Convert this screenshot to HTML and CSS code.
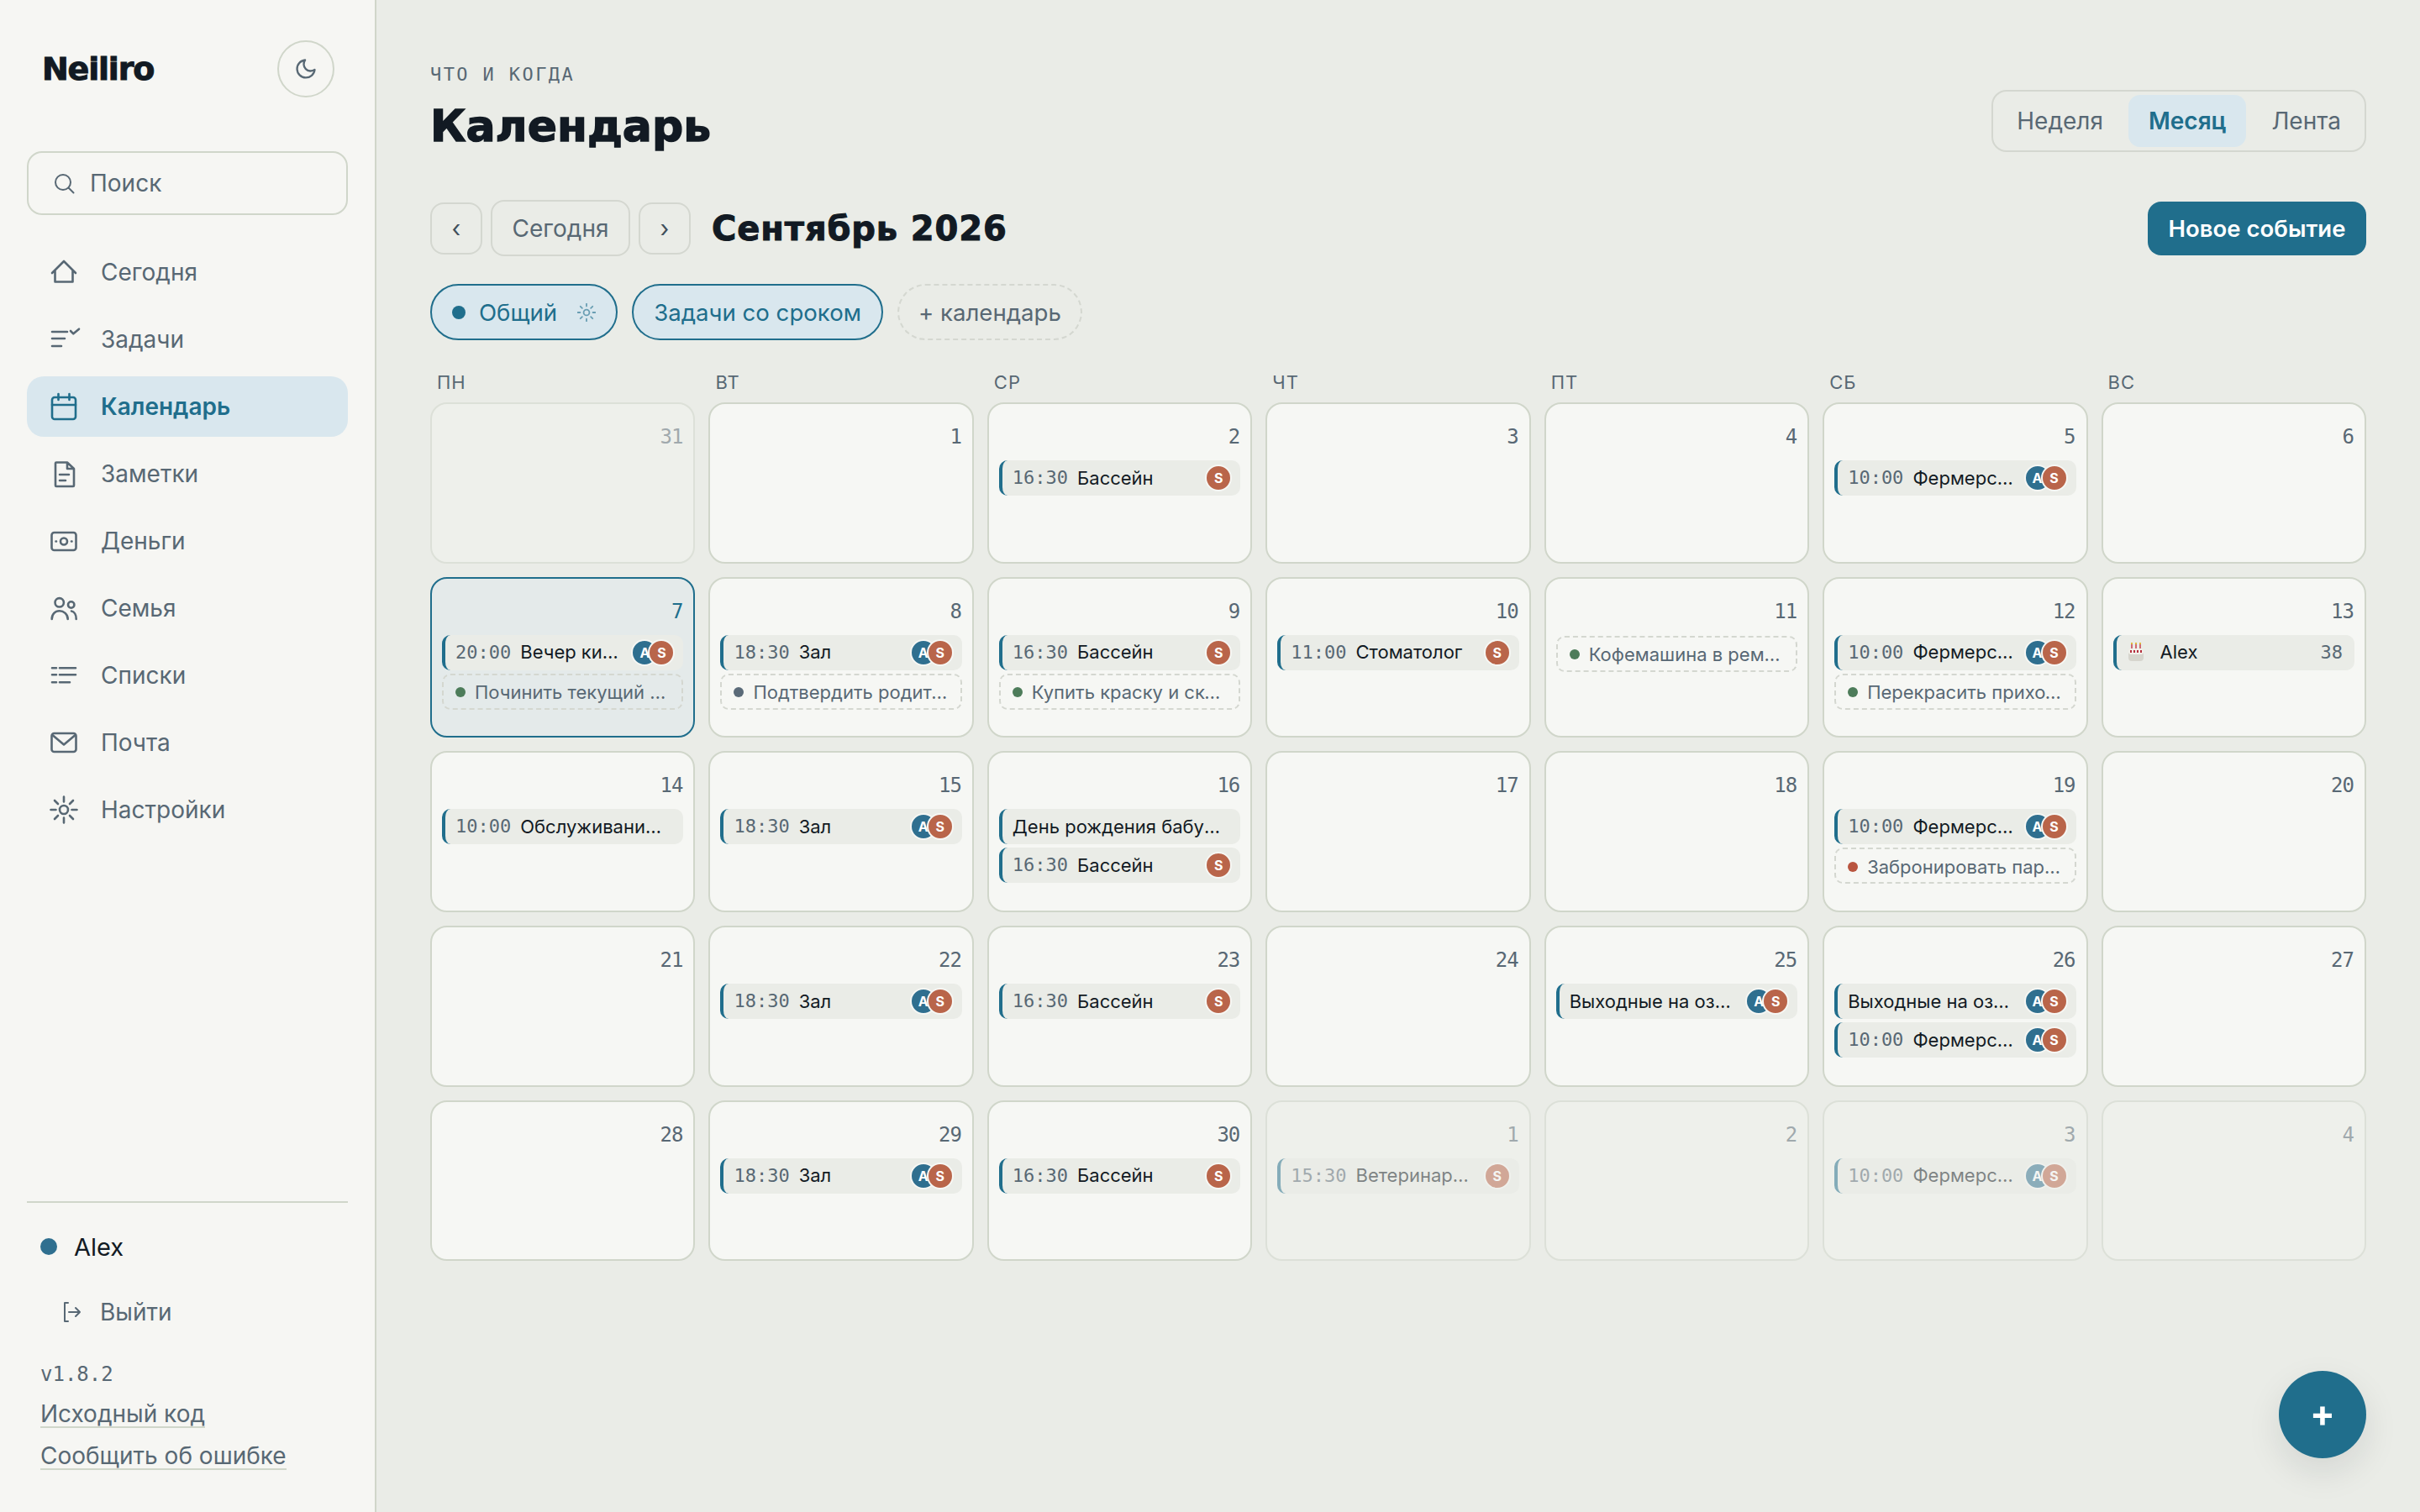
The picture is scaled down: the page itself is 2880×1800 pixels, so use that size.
FILE: index.html
```html
<!DOCTYPE html>
<html lang="ru">
<head>
    <meta charset="utf-8">
    <title>Календарь</title>
    <link rel="stylesheet" href="styles.css">
</head>
<body>
    <aside class="sidebar">
        <div class="brand">
            <div class="logo">Neiliro</div>
            <button class="theme-btn">
                <svg width="28" height="28" viewBox="0 0 24 24" class="icon-thin"><path d="M21 12.79A9 9 0 1 1 11.21 3 7 7 0 0 0 21 12.79z"/></svg>
            </button>
        </div>

        <div class="search">
            <svg width="24" height="24" viewBox="0 0 24 24" class="icon-thin"><circle cx="11" cy="11" r="9"/><path d="M17.5 17.5 23.5 23.5"/></svg>
            <span>Поиск</span>
        </div>

        <nav class="nav">
            <a class="nav-item">
                <svg width="32" height="32" viewBox="0 0 32 32" class="icon"><path d="M2 17 16 3l14 14M5.5 14v13.5h21V14"/></svg>
                <span>Сегодня</span>
            </a>
            <a class="nav-item">
                <svg width="32" height="32" viewBox="0 0 32 32" class="icon"><path d="M2 7h18M2 15h15M2 24h11M24 6l3.3 3.3L34 3.7"/></svg>
                <span>Задачи</span>
            </a>
            <a class="nav-item active">
                <svg width="32" height="32" viewBox="0 0 32 32" class="icon"><rect x="2" y="5" width="28" height="26" rx="3"/><path d="M2 14h28M9.5 1v7M22.5 1v7"/></svg>
                <span>Календарь</span>
            </a>
            <a class="nav-item">
                <svg width="32" height="32" viewBox="0 0 32 32" class="icon"><path d="M6 3.5a1 1 0 0 1 1-1h13l8 7.5v20a1 1 0 0 1-1 1H7a1 1 0 0 1-1-1zM20 2.500V10h8M11 17h11M11 24h7"/></svg>
                <span>Заметки</span>
            </a>
            <a class="nav-item">
                <svg width="32" height="32" viewBox="0 0 32 32" class="icon"><rect x="1.500" y="6" width="29" height="21" rx="3"/><circle cx="16" cy="16.500" r="4"/><path d="M6.500 16.500h.5M25 16.500h.5"/></svg>
                <span>Деньги</span>
            </a>
            <a class="nav-item">
                <svg width="32" height="32" viewBox="0 0 32 32" class="icon"><circle cx="10.700" cy="9.300" r="5.200"/><circle cx="24.700" cy="12" r="3.700"/><path d="M1.700 29c0-6 4-9.700 9-9.700s10 3.700 10 9.700M25 19.500c3.500.5 5.700 4.500 5.700 9.500"/></svg>
                <span>Семья</span>
            </a>
            <a class="nav-item">
                <svg width="32" height="32" viewBox="0 0 32 32" class="icon"><path d="M2 7.300h5M11 7.300h19M2 15.300h5M11 15.300h19M2 24.300h5M11 24.300h12"/></svg>
                <span>Списки</span>
            </a>
            <a class="nav-item">
                <svg width="32" height="32" viewBox="0 0 32 32" class="icon"><rect x="1.500" y="5" width="29" height="22" rx="3"/><path d="M3 7.500 16 18.500 29 7.500"/></svg>
                <span>Почта</span>
            </a>
            <a class="nav-item">
                <svg width="32" height="32" viewBox="0 0 32 32" class="icon"><circle cx="16" cy="16" r="5"/><path d="M16 .5v6M16 25.500v6M.5 16h6M25.500 16h6M5 5l4 4M23 23l4 4M27 5l-4 4M9 23l-4 4"/></svg>
                <span>Настройки</span>
            </a>
        </nav>

        <div class="side-foot">
            <div class="user"><span class="user-dot"></span><span>Alex</span></div>
            <a class="logout">
                <svg width="24" height="24" viewBox="0 0 24 24" class="icon-thin"><path d="M7 1H3v22h4M8 12h13M16 7l5 5-5 5"/></svg>
                <span>Выйти</span>
            </a>
            <div class="version">v1.8.2</div>
            <a class="foot-link">Исходный код</a>
            <a class="foot-link">Сообщить об ошибке</a>
        </div>
    </aside>

    <main class="main">
        <header class="page-head">
            <div>
                <div class="eyebrow">ЧТО И КОГДА</div>
                <h1 class="page-title">Календарь</h1>
            </div>
            <div class="segment">
                <span class="segment-item">Неделя</span>
                <span class="segment-item active">Месяц</span>
                <span class="segment-item">Лента</span>
            </div>
        </header>

        <div class="toolbar">
            <button class="tool-btn square">‹</button>
            <button class="tool-btn today">Сегодня</button>
            <button class="tool-btn square">›</button>
            <h2 class="month-title">Сентябрь 2026</h2>
            <button class="primary-btn">Новое событие</button>
        </div>

        <div class="chips">
            <span class="chip">
                <span class="chip-dot"></span>
                <span>Общий</span>
                <svg width="22" height="22" viewBox="0 0 32 32" class="chip-sun"><circle cx="16" cy="16" r="5"/><path d="M16 1v4M16 27v4M1 16h4M27 16h4M5.500 5.500l3 3M23.500 23.500l3 3M26.500 5.500l-3 3M8.500 23.500l-3 3"/></svg>
            </span>
            <span class="chip">Задачи со сроком</span>
            <span class="chip chip-add">+ календарь</span>
        </div>

        <div class="weekdays">
            <span>ПН</span><span>ВТ</span><span>СР</span><span>ЧТ</span><span>ПТ</span><span>СБ</span><span>ВС</span>
        </div>

        <div class="calendar">
            <div class="day muted"><div class="day-num">31</div></div>
            <div class="day"><div class="day-num">1</div></div>
            <div class="day"><div class="day-num">2</div>
                <div class="event"><span class="event-time">16:30</span><span class="event-title">Бассейн</span><span class="avatars"><span class="avatar s">S</span></span></div>
            </div>
            <div class="day"><div class="day-num">3</div></div>
            <div class="day"><div class="day-num">4</div></div>
            <div class="day"><div class="day-num">5</div>
                <div class="event"><span class="event-time">10:00</span><span class="event-title">Фермерский рынок</span><span class="avatars"><span class="avatar a">A</span><span class="avatar s">S</span></span></div>
            </div>
            <div class="day"><div class="day-num">6</div></div>

            <div class="day today"><div class="day-num">7</div>
                <div class="event"><span class="event-time">20:00</span><span class="event-title">Вечер кино дома</span><span class="avatars"><span class="avatar a">A</span><span class="avatar s">S</span></span></div>
                <div class="task"><span class="task-dot green"></span><span class="task-title">Починить текущий кран на кухне</span></div>
            </div>
            <div class="day"><div class="day-num">8</div>
                <div class="event"><span class="event-time">18:30</span><span class="event-title">Зал</span><span class="avatars"><span class="avatar a">A</span><span class="avatar s">S</span></span></div>
                <div class="task"><span class="task-dot slate"></span><span class="task-title">Подтвердить родительское собрание</span></div>
            </div>
            <div class="day"><div class="day-num">9</div>
                <div class="event"><span class="event-time">16:30</span><span class="event-title">Бассейн</span><span class="avatars"><span class="avatar s">S</span></span></div>
                <div class="task"><span class="task-dot green"></span><span class="task-title">Купить краску и скотч для ремонта</span></div>
            </div>
            <div class="day"><div class="day-num">10</div>
                <div class="event"><span class="event-time">11:00</span><span class="event-title">Стоматолог</span><span class="avatars"><span class="avatar s">S</span></span></div>
            </div>
            <div class="day"><div class="day-num">11</div>
                <div class="task first"><span class="task-dot green"></span><span class="task-title">Кофемашина в ремонт сдать</span></div>
            </div>
            <div class="day"><div class="day-num">12</div>
                <div class="event"><span class="event-time">10:00</span><span class="event-title">Фермерский рынок</span><span class="avatars"><span class="avatar a">A</span><span class="avatar s">S</span></span></div>
                <div class="task"><span class="task-dot green"></span><span class="task-title">Перекрасить прихожую и коридор</span></div>
            </div>
            <div class="day"><div class="day-num">13</div>
                <div class="event birthday">
                    <svg width="22" height="24" viewBox="0 0 22 24" class="cake"><path d="M6 3v5M11 3v5M16 3v5" stroke="#c8414f" stroke-width="1.500"/><path d="M6 1v2M11 1v2M16 1v2" stroke="#e0b93f" stroke-width="2"/><rect x="2" y="8" width="18" height="15" rx="4" fill="#d6d5cd"/><rect x="2" y="8" width="18" height="7" rx="3" fill="#f2f0ea"/><path d="M5 10v3M9 10v3M13 10v3M17 10v3" stroke="#b5303f" stroke-width="2"/></svg>
                    <span class="event-title">Alex</span>
                    <span class="event-age">38</span>
                </div>
            </div>

            <div class="day"><div class="day-num">14</div>
                <div class="event"><span class="event-time">10:00</span><span class="event-title">Обслуживание машины в сервисе</span></div>
            </div>
            <div class="day"><div class="day-num">15</div>
                <div class="event"><span class="event-time">18:30</span><span class="event-title">Зал</span><span class="avatars"><span class="avatar a">A</span><span class="avatar s">S</span></span></div>
            </div>
            <div class="day"><div class="day-num">16</div>
                <div class="event"><span class="event-title">День рождения бабушки Нины</span></div>
                <div class="event"><span class="event-time">16:30</span><span class="event-title">Бассейн</span><span class="avatars"><span class="avatar s">S</span></span></div>
            </div>
            <div class="day"><div class="day-num">17</div></div>
            <div class="day"><div class="day-num">18</div></div>
            <div class="day"><div class="day-num">19</div>
                <div class="event"><span class="event-time">10:00</span><span class="event-title">Фермерский рынок</span><span class="avatars"><span class="avatar a">A</span><span class="avatar s">S</span></span></div>
                <div class="task"><span class="task-dot red"></span><span class="task-title">Забронировать парковку у озера</span></div>
            </div>
            <div class="day"><div class="day-num">20</div></div>

            <div class="day"><div class="day-num">21</div></div>
            <div class="day"><div class="day-num">22</div>
                <div class="event"><span class="event-time">18:30</span><span class="event-title">Зал</span><span class="avatars"><span class="avatar a">A</span><span class="avatar s">S</span></span></div>
            </div>
            <div class="day"><div class="day-num">23</div>
                <div class="event"><span class="event-time">16:30</span><span class="event-title">Бассейн</span><span class="avatars"><span class="avatar s">S</span></span></div>
            </div>
            <div class="day"><div class="day-num">24</div></div>
            <div class="day"><div class="day-num">25</div>
                <div class="event"><span class="event-title">Выходные на озере с друзьями</span><span class="avatars"><span class="avatar a">A</span><span class="avatar s">S</span></span></div>
            </div>
            <div class="day"><div class="day-num">26</div>
                <div class="event"><span class="event-title">Выходные на озере с друзьями</span><span class="avatars"><span class="avatar a">A</span><span class="avatar s">S</span></span></div>
                <div class="event"><span class="event-time">10:00</span><span class="event-title">Фермерский рынок</span><span class="avatars"><span class="avatar a">A</span><span class="avatar s">S</span></span></div>
            </div>
            <div class="day"><div class="day-num">27</div></div>

            <div class="day"><div class="day-num">28</div></div>
            <div class="day"><div class="day-num">29</div>
                <div class="event"><span class="event-time">18:30</span><span class="event-title">Зал</span><span class="avatars"><span class="avatar a">A</span><span class="avatar s">S</span></span></div>
            </div>
            <div class="day"><div class="day-num">30</div>
                <div class="event"><span class="event-time">16:30</span><span class="event-title">Бассейн</span><span class="avatars"><span class="avatar s">S</span></span></div>
            </div>
            <div class="day muted"><div class="day-num">1</div>
                <div class="event"><span class="event-time">15:30</span><span class="event-title">Ветеринарная клиника</span><span class="avatars"><span class="avatar s">S</span></span></div>
            </div>
            <div class="day muted"><div class="day-num">2</div></div>
            <div class="day muted"><div class="day-num">3</div>
                <div class="event"><span class="event-time">10:00</span><span class="event-title">Фермерский рынок</span><span class="avatars"><span class="avatar a">A</span><span class="avatar s">S</span></span></div>
            </div>
            <div class="day muted"><div class="day-num">4</div></div>
        </div>

        <button class="fab">+</button>
    </main>
</body>
</html>
```

FILE: styles.css
```css
:root {
    --primary-color: #206e8c;
    --primary-soft: #d9e7ee;
    --ink: #121a23;
    --muted: #586874;
    --page-bg: #eaece7;
    --panel-bg: #f6f6f3;
    --line: #d0d6ca;
    --line-soft: #d4d7d0;
}

* {
    box-sizing: border-box;
    font-family: 'Inter', 'Noto Sans', sans-serif;
}

html, body {
    height: 100%;
}

body {
    margin: 0;
    display: flex;
    background-color: var(--page-bg);
    color: var(--ink);
}

button {
    font: inherit;
    padding: 0;
    background: none;
    cursor: pointer;
}

.icon, .icon-thin {
    flex: none;
    fill: none;
    stroke: currentColor;
    stroke-linecap: round;
    stroke-linejoin: round;
    overflow: visible;
}

.icon {
    stroke-width: 2.6;
}

.icon-thin {
    stroke-width: 2;
}

/* sidebar */

.sidebar {
    width: 448px;
    flex: none;
    height: 1800px;
    display: flex;
    flex-direction: column;
    padding: 48px 32px 50px;
    background-color: var(--panel-bg);
    border-right: 2px solid var(--line);
}

.brand {
    display: flex;
    align-items: center;
    justify-content: space-between;
    height: 68px;
    padding: 0 16px 0 18px;
}

.logo {
    font-family: 'DejaVu Sans', sans-serif;
    font-size: 38px;
    font-weight: 700;
    letter-spacing: -1.2px;
    -webkit-text-stroke: 1px var(--ink);
    color: var(--ink);
}

.theme-btn {
    width: 68px;
    height: 68px;
    display: flex;
    align-items: center;
    justify-content: center;
    border: 2px solid var(--line);
    border-radius: 50%;
    color: var(--muted);
}

.search {
    display: flex;
    align-items: center;
    gap: 19px;
    height: 76px;
    margin-top: 64px;
    padding-left: 30px;
    border: 2px solid var(--line);
    border-radius: 18px;
    font-size: 28px;
    color: var(--muted);
}

.nav {
    display: flex;
    flex-direction: column;
    gap: 8px;
    margin-top: 32px;
}

.nav-item {
    display: flex;
    align-items: center;
    gap: 28px;
    height: 72px;
    padding-left: 28px;
    border-radius: 20px;
    font-size: 28px;
    color: var(--muted);
}

.nav-item.active {
    background-color: var(--primary-soft);
    color: var(--primary-color);
    font-weight: 600;
}

.side-foot {
    margin-top: auto;
    padding-top: 36px;
    border-top: 2px solid var(--line);
}

.user {
    display: flex;
    align-items: center;
    gap: 20px;
    height: 32px;
    padding-left: 16px;
    font-size: 29px;
}

.user-dot {
    width: 20px;
    height: 20px;
    border-radius: 50%;
    background-color: #2f6f8f;
}

.logout {
    display: flex;
    align-items: center;
    gap: 21px;
    height: 44px;
    margin-top: 40px;
    padding-left: 42px;
    font-size: 28px;
    color: var(--muted);
}

.version {
    margin-top: 36px;
    padding-left: 16px;
    font-family: 'DejaVu Sans Mono', monospace;
    font-size: 24px;
    line-height: 32px;
    color: var(--muted);
}

.foot-link {
    display: table;
    margin: 18px 0 0 16px;
    font-size: 28px;
    line-height: 30px;
    color: var(--muted);
    border-bottom: 2px solid var(--line);
}

.version + .foot-link {
    margin-top: 16px;
}

/* main column */

.main {
    flex: 1;
    min-width: 0;
    padding: 72px 64px 0;
}

.page-head {
    display: flex;
    align-items: flex-end;
    justify-content: space-between;
}

.eyebrow {
    padding-top: 2px;
    font-family: 'DejaVu Sans Mono', monospace;
    font-size: 22px;
    line-height: 30px;
    letter-spacing: 2.4px;
    color: var(--muted);
}

.page-title {
    margin: 16px 0 0;
    font-family: 'DejaVu Sans', sans-serif;
    font-size: 52px;
    line-height: 61px;
    font-weight: 700;
    -webkit-text-stroke: 1.4px var(--ink);
    color: var(--ink);
}

.segment {
    display: flex;
    gap: 6px;
    height: 74px;
    padding: 4px;
    border: 2px solid var(--line-soft);
    border-radius: 18px;
}

.segment-item {
    display: flex;
    align-items: center;
    padding: 0 24px;
    border-radius: 14px;
    font-size: 28px;
    color: var(--muted);
}

.segment-item.active {
    background-color: var(--primary-soft);
    color: var(--primary-color);
    font-weight: 600;
}

.toolbar {
    display: flex;
    align-items: center;
    gap: 10px;
    height: 67px;
    margin-top: 57px;
}

.tool-btn {
    border: 2px solid var(--line-soft);
    border-radius: 16px;
    font-size: 28px;
    color: var(--muted);
}

.tool-btn.square {
    width: 62px;
    height: 62px;
    color: #3f4f5b;
}

.tool-btn.today {
    width: 166px;
    height: 67px;
}

.month-title {
    margin: 0 0 0 15px;
    font-family: 'DejaVu Sans', sans-serif;
    font-size: 40px;
    font-weight: 700;
    letter-spacing: 0.9px;
    -webkit-text-stroke: 1px var(--ink);
    color: var(--ink);
}

.primary-btn {
    width: 260px;
    height: 64px;
    margin-left: auto;
    border: none;
    border-radius: 16px;
    background-color: var(--primary-color);
    color: white;
    font-size: 27.5px;
    font-weight: 600;
}

.chips {
    display: flex;
    gap: 17px;
    margin-top: 33px;
}

.chip {
    display: flex;
    align-items: center;
    gap: 16px;
    height: 67px;
    padding: 0 24px;
    border: 2px solid var(--primary-color);
    border-radius: 34px;
    background-color: var(--primary-soft);
    color: var(--primary-color);
    font-size: 27.6px;
}

.chip-dot {
    width: 16px;
    height: 16px;
    border-radius: 50%;
    background-color: var(--primary-color);
}

.chip-sun {
    margin-left: 8px;
    fill: none;
    stroke: var(--primary-color);
    stroke-width: 2.6;
    stroke-linecap: round;
    opacity: 0.6;
}

.chip-add {
    padding: 0 23px;
    border: 2px dashed var(--line-soft);
    background: none;
    color: var(--muted);
}

.weekdays {
    display: grid;
    grid-template-columns: repeat(7, 1fr);
    column-gap: 16px;
    height: 40px;
    margin-top: 34px;
    padding-bottom: 8px;
    font-family: 'DejaVu Sans Mono', monospace;
    font-size: 22px;
    line-height: 32px;
    letter-spacing: 1px;
    color: var(--muted);
}

.weekdays span {
    padding-left: 8px;
}

/* month grid */

.calendar {
    display: grid;
    grid-template-columns: repeat(7, minmax(0, 1fr));
    grid-auto-rows: 191.7px;
    gap: 16px;
}

.day {
    display: flex;
    flex-direction: column;
    gap: 4px;
    padding: 22px 12px 0;
    border: 2px solid var(--line);
    border-radius: 20px;
    background-color: #f6f7f4;
}

.day.muted {
    opacity: 0.5;
    background-color: #f3f5f0;
}

.day.today {
    border-color: var(--primary-color);
    background-color: #e4eaea;
}

.day-num {
    height: 32px;
    margin-bottom: 9px;
    padding-right: 1px;
    font-family: 'DejaVu Sans Mono', monospace;
    font-size: 24px;
    line-height: 34px;
    letter-spacing: -1px;
    text-align: right;
    color: var(--muted);
}

.today .day-num {
    color: var(--primary-color);
}

.event {
    display: flex;
    align-items: center;
    gap: 11px;
    height: 42px;
    flex: none;
    padding: 0 10px 1px 12px;
    border-left: 4px solid var(--primary-color);
    border-radius: 10px;
    background-color: var(--page-bg);
    font-size: 22px;
    color: var(--ink);
}

.event-time {
    flex: none;
    font-family: 'DejaVu Sans Mono', monospace;
    font-size: 22px;
    color: var(--muted);
}

.event-title, .task-title {
    flex: 1;
    min-width: 0;
    overflow: hidden;
    white-space: nowrap;
    text-overflow: ellipsis;
}

.event-title:last-child {
    padding-right: 6px;
}

.event-age {
    padding-right: 4px;
    font-family: 'DejaVu Sans Mono', monospace;
    font-size: 22px;
    color: var(--muted);
}

.birthday {
    gap: 18px;
}

.cake {
    flex: none;
    fill: none;
}

.avatars {
    display: flex;
    flex: none;
    margin-top: 1px;
}

.avatar {
    display: flex;
    align-items: center;
    justify-content: center;
    width: 32px;
    height: 32px;
    border: 2px solid #f6f7f4;
    border-radius: 50%;
    color: white;
    font-size: 16px;
    font-weight: 700;
}

.avatar.a {
    background-color: #2f6f8f;
}

.avatar.s {
    background-color: #b9654a;
}

.avatar + .avatar {
    margin-left: -12px;
}

.task {
    display: flex;
    align-items: center;
    gap: 11px;
    height: 43px;
    flex: none;
    padding: 2px 12px 0 14px;
    border: 2px dashed var(--line-soft);
    border-radius: 10px;
    font-size: 22px;
    color: var(--muted);
}

.task.first {
    margin-top: 1px;
}

.task-dot {
    flex: none;
    width: 12px;
    height: 12px;
    border-radius: 50%;
}

.task-dot.green {
    background-color: #4d7c5a;
}

.task-dot.slate {
    background-color: #5a6a78;
}

.task-dot.red {
    background-color: #b9553f;
}

.fab {
    position: fixed;
    right: 64px;
    bottom: 64px;
    width: 104px;
    height: 104px;
    padding-bottom: 4px;
    border: none;
    border-radius: 50%;
    background-color: var(--primary-color);
    box-shadow: 0 16px 40px rgba(18, 26, 35, 0.1);
    color: white;
    font-size: 44px;
    font-weight: 700;
    line-height: 1;
}
```
